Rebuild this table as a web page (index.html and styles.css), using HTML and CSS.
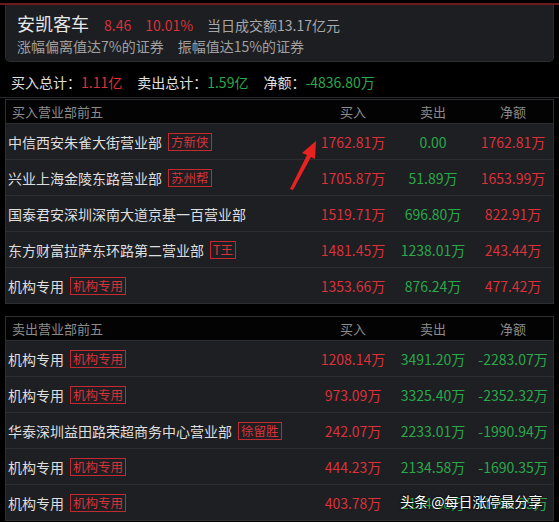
FILE: index.html
```html
<!DOCTYPE html>
<html lang="zh-CN">
<head>
  <meta charset="UTF-8">
  <title>龙虎榜 | 安凯客车</title>
  <meta name="viewport" content="width=device-width, initial-scale=1.0">
  <link rel="stylesheet" href="styles.css">
</head>
<body>

  <div class="topline"></div>

  <!-- Stock Summary -->
  <div class="card">
    <div class="title-row">
      <span class="stock-name">安凯客车</span>
      <span class="red">8.46</span>
      <span class="red">10.01%</span>
      <span class="muted">当日成交额13.17亿元</span>
    </div>
    <div class="reason-row">
      <span>涨幅偏离值达7%的证券</span>
      <span>振幅值达15%的证券</span>
    </div>
  </div>

  <div class="totals">
    <span>买入总计：<em class="red">1.11亿</em></span>
    <span>卖出总计：<em class="green">1.59亿</em></span>
    <span>净额：<em class="green">-4836.80万</em></span>
  </div>

  <!-- Buy Top 5 -->
  <div class="board">
    <div class="row head">
      <div class="name">买入营业部前五</div>
      <div>买入</div>
      <div>卖出</div>
      <div>净额</div>
    </div>
    <div class="row">
      <div class="name">中信西安朱雀大街营业部<span class="tag">方新侠</span></div>
      <div class="red">1762.81万</div>
      <div class="green">0.00</div>
      <div class="red">1762.81万</div>
    </div>
    <div class="row">
      <div class="name">兴业上海金陵东路营业部<span class="tag">苏州帮</span></div>
      <div class="red">1705.87万</div>
      <div class="green">51.89万</div>
      <div class="red">1653.99万</div>
    </div>
    <div class="row">
      <div class="name">国泰君安深圳深南大道京基一百营业部</div>
      <div class="red">1519.71万</div>
      <div class="green">696.80万</div>
      <div class="red">822.91万</div>
    </div>
    <div class="row">
      <div class="name">东方财富拉萨东环路第二营业部<span class="tag">T王</span></div>
      <div class="red">1481.45万</div>
      <div class="green">1238.01万</div>
      <div class="red">243.44万</div>
    </div>
    <div class="row">
      <div class="name">机构专用<span class="tag">机构专用</span></div>
      <div class="red">1353.66万</div>
      <div class="green">876.24万</div>
      <div class="red">477.42万</div>
    </div>
  </div>

  <!-- Sell Top 5 -->
  <div class="board">
    <div class="row head">
      <div class="name">卖出营业部前五</div>
      <div>买入</div>
      <div>卖出</div>
      <div>净额</div>
    </div>
    <div class="row">
      <div class="name">机构专用<span class="tag">机构专用</span></div>
      <div class="red">1208.14万</div>
      <div class="green">3491.20万</div>
      <div class="green">-2283.07万</div>
    </div>
    <div class="row">
      <div class="name">机构专用<span class="tag">机构专用</span></div>
      <div class="red">973.09万</div>
      <div class="green">3325.40万</div>
      <div class="green">-2352.32万</div>
    </div>
    <div class="row">
      <div class="name">华泰深圳益田路荣超商务中心营业部<span class="tag">徐留胜</span></div>
      <div class="red">242.07万</div>
      <div class="green">2233.01万</div>
      <div class="green">-1990.94万</div>
    </div>
    <div class="row">
      <div class="name">机构专用<span class="tag">机构专用</span></div>
      <div class="red">444.23万</div>
      <div class="green">2134.58万</div>
      <div class="green">-1690.35万</div>
    </div>
    <div class="row">
      <div class="name">机构专用<span class="tag">机构专用</span></div>
      <div class="red">403.78万</div>
      <div class="green">2134.58万</div>
      <div class="green">-1690.35万</div>
    </div>
  </div>

  <!-- annotation arrow -->
  <svg class="arrow" width="34" height="52" viewBox="0 0 34 52">
    <path d="M3 50 L20 16 L15 14 L29 2 L28 20 L24 18 L6 51 Z" fill="#e8231f"/>
  </svg>

  <div class="watermark">头条 @每日涨停最分享</div>

</body>
</html>
```

FILE: styles.css
```css
body {
  margin: 0;
  background: #000;
  font-family: "Noto Sans CJK SC", "Noto Sans", sans-serif;
  color: #dcdcdc;
  font-size: 14px;
  position: relative;
  width: 559px;
  height: 522px;
  overflow: hidden;
}

.red { color: #dc3139; }
.green { color: #2aa84a; }
.muted { color: #a8a8a8; }

em { font-style: normal; }

.topline {
  height: 2px;
  margin-top: 3px;
  background: #6e1a1c;
}

.card {
  margin: 0 5px;
  height: 57px;
  background: #1c1e22;
  border: 1px solid #2b2d31;
  border-top: none;
  border-radius: 0 0 5px 5px;
  padding: 0 11px;
  box-sizing: border-box;
}

.title-row {
  display: flex;
  align-items: baseline;
  gap: 14px;
  padding-top: 5px;
  height: 27px;
  font-size: 14px;
}

.stock-name {
  font-size: 18px;
  color: #e8e8e8;
  margin-right: 1px;
}

.reason-row {
  display: flex;
  gap: 14px;
  color: #a0a0a0;
  line-height: 18px;
}

.totals {
  display: flex;
  gap: 15px;
  padding: 0 11px;
  height: 35px;
  line-height: 41px;
  border-bottom: 1px solid #26282c;
  color: #e0e0e0;
}

.board {
  margin: 1px 5px 12px 5px;
  border: 1px solid #2c2e32;
  background: #1d1f23;
}

.row {
  display: grid;
  grid-template-columns: 1fr 80px 80px 80px;
  height: 36px;
  align-items: center;
  border-top: 1px solid #2c2e32;
  box-sizing: border-box;
  text-align: center;
}

.row .name {
  text-align: left;
  padding-left: 2px;
  color: #dedede;
  display: flex;
  align-items: center;
}

.row.head {
  height: 23px;
  border-top: none;
  background: #030303;
  color: #8c8c8c;
  font-size: 13px;
}

.row.head .name {
  color: #8c8c8c;
  padding-left: 6px;
}

.tag {
  margin-left: 6px;
  border: 1px solid #c02a30;
  color: #d8333a;
  font-size: 12.5px;
  line-height: 16px;
  padding: 0 2px;
}

.arrow {
  position: absolute;
  left: 287px;
  top: 139px;
}

.watermark {
  position: absolute;
  left: 400px;
  top: 491px;
  color: #fff;
  font-size: 14px;
  text-shadow: 0 0 2px #000, 0 0 2px #000;
}
```
